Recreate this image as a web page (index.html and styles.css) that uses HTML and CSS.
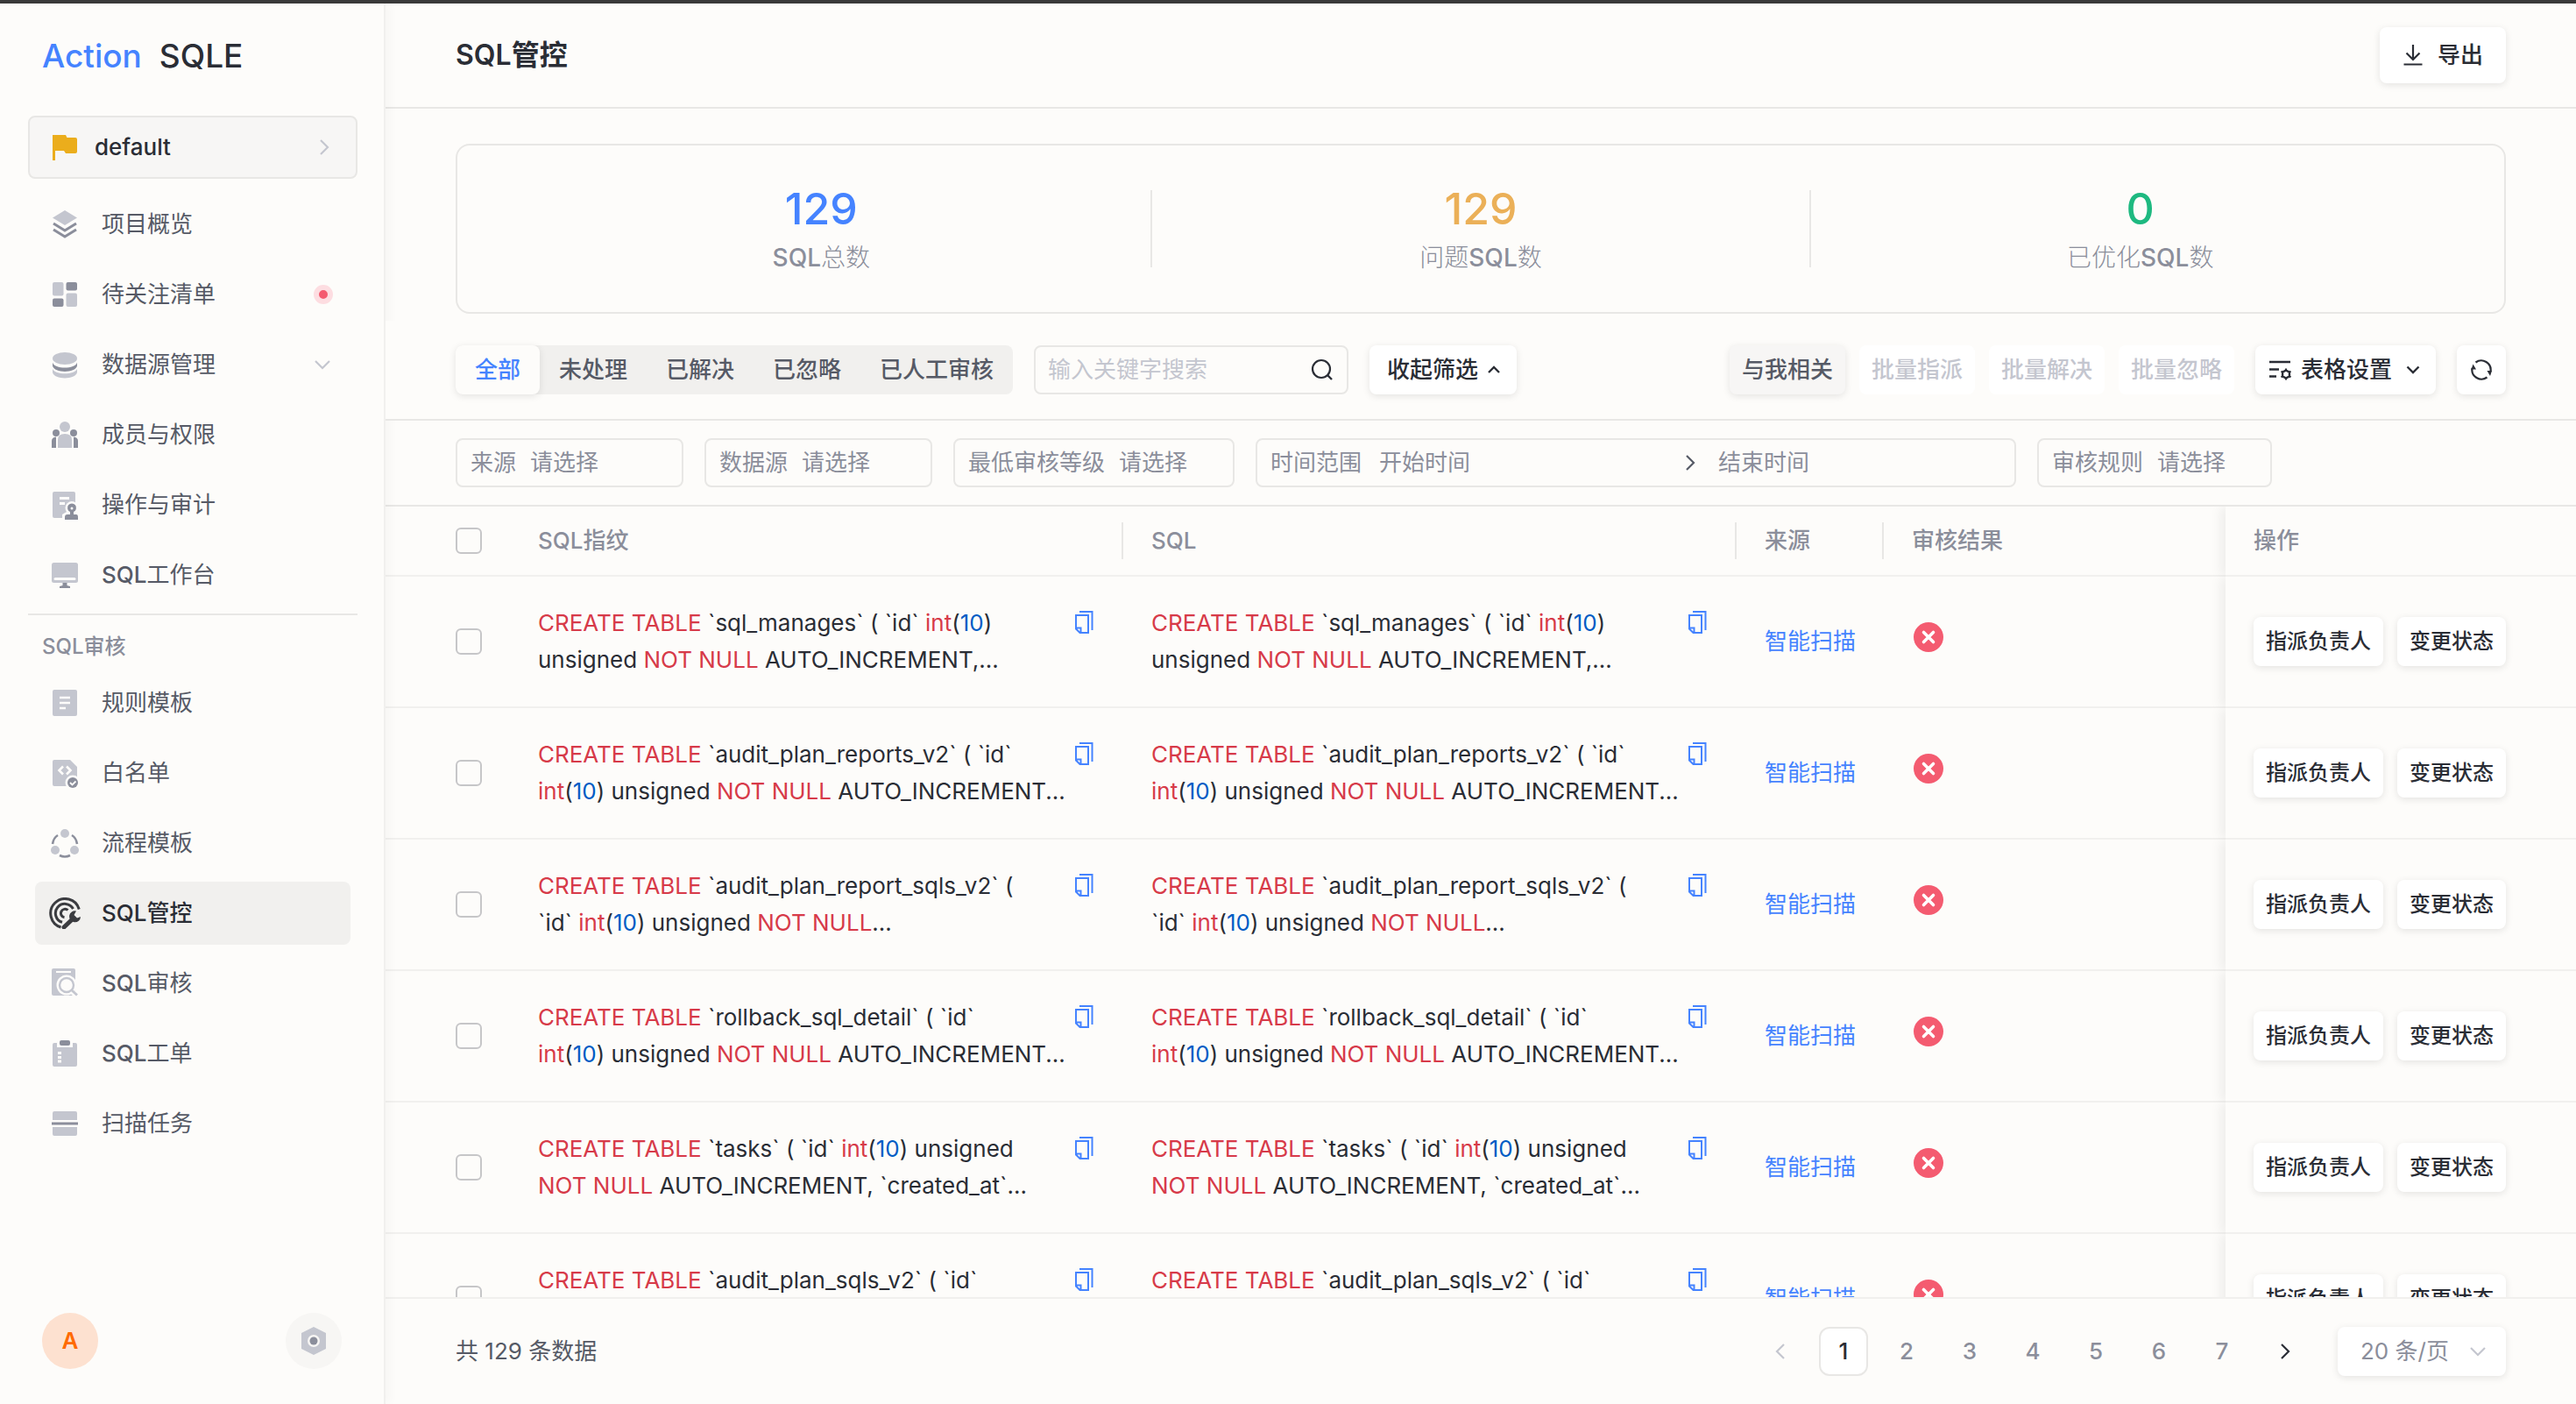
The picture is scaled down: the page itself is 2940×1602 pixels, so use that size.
FILE: index.html
```html
<!DOCTYPE html>
<html lang="zh-CN">
<head>
<meta charset="utf-8">
<title>SQL管控 - Action SQLE</title>
<link rel="stylesheet" href="styles.css">
</head>
<body>
<svg class="sprite" aria-hidden="true">
  <symbol id="i-copy" viewBox="0 0 28 28"><path d="M8 2h14.500v21M4 6h14v20h-9.500L4 21.500zM4 20.500h5.500V26" fill="none" stroke="currentColor" stroke-width="2"/></symbol>
  <symbol id="i-error" viewBox="0 0 34 34"><circle cx="17" cy="17" r="17" fill="#f45b70"/><path d="M11.500 11.500l11 11M22.500 11.500l-11 11" stroke="#fff" stroke-width="3.600" stroke-linecap="round"/></symbol>
  <symbol id="i-right" viewBox="0 0 24 24"><path d="M8 4l8 8-8 8" fill="none" stroke="currentColor" stroke-width="2.200"/></symbol>
  <symbol id="i-left" viewBox="0 0 24 24"><path d="M16 4l-8 8 8 8" fill="none" stroke="currentColor" stroke-width="2.200"/></symbol>
  <symbol id="i-down" viewBox="0 0 24 24"><path d="M4 8l8 8 8-8" fill="none" stroke="currentColor" stroke-width="2.200"/></symbol>
</svg>
<div class="app">
  <aside class="sidebar">
    <div class="logo"><span class="logo-brand">Action</span><span>SQLE</span></div>
    <button class="project" type="button">
      <svg class="icon36" viewBox="0 0 36 36"><path d="M4 4h15l1.500 3H30q2 0 2 2v14q0 2-2 2H19l-2-3H7v11H4z" fill="#ebad1c"/></svg>
      <span class="project-name">default</span>
      <svg class="icon24 faint"><use href="#i-right"/></svg>
    </button>
    <nav class="menu">
      <a class="item" href="#"><svg class="icon36" viewBox="0 0 36 36"><path d="M18 2l14 8.500L18 19 4 10.500z" fill="#c4c6cf"/><path d="M5 17l13 8 13-8M5 24l13 8 13-8" fill="none" stroke="#8b8e9b" stroke-width="3"/></svg><span>项目概览</span></a>
      <a class="item" href="#"><svg class="icon36" viewBox="0 0 36 36"><g fill="#c4c6cf"><rect x="4" y="4" width="12.500" height="15.500" rx="2"/><rect x="19.500" y="16.500" width="12.500" height="15.500" rx="2"/></g><g fill="#8b8e9b"><rect x="19.500" y="4" width="12.500" height="9.500" rx="2"/><rect x="4" y="22.500" width="12.500" height="9.500" rx="2"/></g></svg><span>待关注清单</span><i class="dot"></i></a>
      <a class="item" href="#"><svg class="icon36" viewBox="0 0 36 36"><ellipse cx="18" cy="11" rx="14" ry="7" fill="#c4c6cf"/><path d="M4 15.500c2 8 26 8 28 0v4c-2 8.500-26 8.500-28 0z" fill="#8b8e9b"/><path d="M4 23c3 7 25 7 28 0v4c-2 8.500-26 8.500-28 0z" fill="#c4c6cf"/></svg><span>数据源管理</span><svg class="icon24 faint"><use href="#i-down"/></svg></a>
      <a class="item" href="#"><svg class="icon36" viewBox="0 0 36 36"><g fill="#c4c6cf"><circle cx="18" cy="9" r="6"/><path d="M10 33v-9q0-7 8-7t8 7v9z"/></g><g fill="#8b8e9b"><circle cx="8" cy="16" r="4"/><circle cx="28" cy="16" r="4"/><path d="M3 33v-8q0-4 5-4.500V33zM33 33v-8q0-4-5-4.500V33z"/></g></svg><span>成员与权限</span></a>
      <a class="item" href="#"><svg class="icon36" viewBox="0 0 36 36"><rect x="4" y="3" width="26" height="30" rx="2" fill="#c4c6cf"/><path d="M12 10.500h11M12 16.500h6" stroke="#fdfcfa" stroke-width="3"/><path d="M15 36v-7l5-3a7.500 7.500 0 1 1 12 0l4 3v7z" fill="#fdfcfa"/><path d="M18 35v-3q0-3 3-3h3v-3a5 5 0 1 1 4 0v3h3q2 0 2 3v3z" fill="#8b8e9b"/><circle cx="26" cy="22" r="1.500" fill="#fdfcfa"/></svg><span>操作与审计</span></a>
      <a class="item" href="#"><svg class="icon36" viewBox="0 0 36 36"><rect x="3" y="4" width="30" height="23" rx="2.500" fill="#c4c6cf"/><path d="M7 22.500h22" stroke="#fdfcfa" stroke-width="3" stroke-linecap="round"/><path d="M15.500 27h5v3l3.500 1v2H12v-2l3.500-1z" fill="#8b8e9b"/></svg><span><b>SQL</b>工作台</span></a>
      <h2 class="group">SQL审核</h2>
      <a class="item" href="#"><svg class="icon36" viewBox="0 0 36 36"><rect x="4" y="3" width="28" height="30" rx="2" fill="#c4c6cf"/><path d="M12 12h12M12 18h12M12 24h7" stroke="#fdfcfa" stroke-width="2.600"/></svg><span>规则模板</span></a>
      <a class="item" href="#"><svg class="icon36" viewBox="0 0 36 36"><path d="M6 3h18l8 8v20q0 2-2 2H6q-2 0-2-2V5q0-2 2-2z" fill="#c4c6cf"/><path d="M16 10.500l-4.500 4.500 4.500 4.500M20 10.500l4.500 4.500-4.500 4.500" fill="none" stroke="#fdfcfa" stroke-width="2.600"/><circle cx="27" cy="29" r="8.500" fill="#fdfcfa"/><circle cx="27" cy="29" r="6" fill="#8b8e9b"/><path d="M24 29l2.500 2.500 4-4" fill="none" stroke="#fdfcfa" stroke-width="1.800"/></svg><span>白名单</span></a>
      <a class="item" href="#"><svg class="icon36" viewBox="0 0 36 36"><g fill="#c4c6cf"><circle cx="18" cy="7" r="5"/><circle cx="7" cy="26" r="5"/><circle cx="29" cy="26" r="5"/></g><path d="M4 19q1-7 6-10M32 19q-1-7-6-10M12 32q6 3 12 0" fill="none" stroke="#8b8e9b" stroke-width="2.600"/></svg><span>流程模板</span></a>
      <a class="item active" href="#"><svg class="icon36" viewBox="0 0 36 36"><path d="M34.300 13.500A16.600 16.600 0 1 0 13.500 34M27.500 13A10.700 10.700 0 1 0 15 28.300M21.500 14.500A4.800 4.800 0 1 0 17.500 22.800" fill="none" stroke="#3b3c40" stroke-width="3"/><path d="M17 34l10-9.500" stroke="#3b3c40" stroke-width="5" stroke-linecap="round"/><path d="M31 15.500a6.500 6.500 0 1 0 5 6.500l-4 1.500-3.500-3.500z" fill="#3b3c40"/></svg><span>SQL管控</span></a>
      <a class="item" href="#"><svg class="icon36" viewBox="0 0 36 36"><rect x="3" y="1" width="27" height="31" rx="2" fill="#c4c6cf"/><path d="M8 5h17" stroke="#fdfcfa" stroke-width="2"/><circle cx="20" cy="20" r="11.500" fill="#fdfcfa"/><path d="M26 27l7 7" stroke="#fdfcfa" stroke-width="6"/><circle cx="20" cy="20" r="8" fill="none" stroke="#c4c6cf" stroke-width="2.400"/><path d="M26 26l6 5.500" stroke="#c4c6cf" stroke-width="2.800"/></svg><span><b>SQL</b>审核</span></a>
      <a class="item" href="#"><svg class="icon36" viewBox="0 0 36 36"><path d="M6 6h3v5h18V6h3q2 0 2 2v23q0 2-2 2H6q-2 0-2-2V8q0-2 2-2z" fill="#c4c6cf"/><rect x="12" y="3" width="12" height="6" rx="2" fill="#8b8e9b"/><path d="M10 17.500h4M10 22.500h4M10 27h4" stroke="#fdfcfa" stroke-width="3"/></svg><span><b>SQL</b>工单</span></a>
      <a class="item" href="#"><svg class="icon36" viewBox="0 0 36 36"><path d="M4 14V6q0-2 2-2h24q2 0 2 2v8zM4 22h28v8q0 2-2 2H6q-2 0-2-2z" fill="#c4c6cf"/><path d="M3 18h30" stroke="#8b8e9b" stroke-width="3"/></svg><span>扫描任务</span></a>
    </nav>
    <div class="side-foot">
      <button class="round avatar" type="button">A</button>
      <button class="round settings" type="button" aria-label="设置"><svg class="icon36" viewBox="0 0 36 36"><path d="M18 2l14 7v18l-14 7-14-7V9z" fill="#c4c6cf"/><circle cx="18" cy="18" r="7" fill="#f7f6f4"/><circle cx="18" cy="18" r="4.500" fill="#8b8e9b"/></svg></button>
    </div>
  </aside>

  <main class="main">
    <header class="header">
      <h1>SQL管控</h1>
      <button class="btn export" type="button"><svg class="icon24" viewBox="0 0 24 24"><path d="M12 0v17M4.500 9.500L12 17l7.500-7.500M1.500 22.500h21" fill="none" stroke="currentColor" stroke-width="2.200"/></svg><span>导出</span></button>
    </header>

    <section class="stats">
      <div class="stat"><strong class="blue">129</strong><span><b>SQL</b>总数</span></div>
      <div class="stat"><strong class="orange">129</strong><span>问题<b>SQL</b>数</span></div>
      <div class="stat"><strong class="green">0</strong><span>已优化<b>SQL</b>数</span></div>
    </section>

    <section class="toolbar">
      <div class="segment">
        <button class="seg on" type="button">全部</button><button class="seg" type="button">未处理</button><button class="seg" type="button">已解决</button><button class="seg" type="button">已忽略</button><button class="seg" type="button">已人工审核</button>
      </div>
      <label class="search"><input type="text" placeholder="输入关键字搜索" aria-label="输入关键字搜索"><svg class="icon28" viewBox="0 0 28 28"><circle cx="13" cy="13" r="10" fill="none" stroke="currentColor" stroke-width="2.200"/><path d="M20 20l5 5" stroke="currentColor" stroke-width="2.400"/></svg></label>
      <button class="btn fold" type="button"><span>收起筛选</span><svg class="icon20" viewBox="0 0 20 20"><path d="M4 13l6-6 6 6" fill="none" stroke="currentColor" stroke-width="2.400"/></svg></button>
      <div class="actions">
        <div class="batch">
          <button class="btn mine" type="button">与我相关</button>
          <button class="btn" type="button" disabled>批量指派</button>
          <button class="btn" type="button" disabled>批量解决</button>
          <button class="btn" type="button" disabled>批量忽略</button>
        </div>
        <button class="btn table-set" type="button"><svg class="icon28" viewBox="0 0 28 28"><path d="M2 5h24M2 13.500h11M2 21.500h8" stroke="currentColor" stroke-width="2.400"/><path d="M21 14.500l3.900 2.200v4.600L21 23.500l-3.900-2.200v-4.600z" fill="none" stroke="currentColor" stroke-width="2.400"/><path d="M21 12.500v2M21 23.500v2M15.500 15.700l1.600 1M26.500 15.700l-1.600 1M15.500 22.300l1.600-1M26.500 22.300l-1.600-1" stroke="currentColor" stroke-width="2"/></svg><span>表格设置</span><svg class="icon20" viewBox="0 0 20 20"><path d="M3.500 6.500L10 13l6.500-6.500" fill="none" stroke="currentColor" stroke-width="2.400"/></svg></button>
        <button class="btn refresh" type="button" aria-label="刷新"><svg class="icon28" viewBox="0 0 28 28"><path d="M7.500 5.500A10.800 10.800 0 0 1 24.500 16M20.500 22.500A10.800 10.800 0 0 1 3.500 12" fill="none" stroke="currentColor" stroke-width="2.200"/><path d="M4.500 7.500L8 13.500H2.500zM20.500 15H26l-2 6z" fill="currentColor"/></svg></button>
      </div>
    </section>

    <section class="filters">
      <label class="field w-s"><span>来源</span><select><option>请选择</option></select></label>
      <label class="field w-s"><span>数据源</span><select><option>请选择</option></select></label>
      <label class="field w-m"><span>最低审核等级</span><select><option>请选择</option></select></label>
      <div class="field w-l"><label for="from">时间范围</label><input id="from" type="text" placeholder="开始时间"><svg class="icon24 dark"><use href="#i-right"/></svg><input type="text" placeholder="结束时间" aria-label="结束时间"></div>
      <label class="field w-r"><span>审核规则</span><select><option>请选择</option></select></label>
    </section>

    <div class="table-wrap">
      <table>
        <colgroup><col class="c-check"><col class="c-sql"><col class="c-sql"><col class="c-src"><col><col class="c-op"></colgroup>
        <thead>
          <tr><th class="check"><input type="checkbox" aria-label="全选"></th><th><div class="th sep">SQL指纹</div></th><th><div class="th sep">SQL</div></th><th><div class="th sep">来源</div></th><th><div class="th">审核结果</div></th><th class="op"><div class="th">操作</div></th></tr>
        </thead>
        <tbody>
          <tr>
            <td class="check"><input type="checkbox" aria-label="选择"></td>
            <td><div class="sql"><code><em>CREATE</em> <em>TABLE</em> `sql_manages` ( `id` <em>int</em>(<i>10</i>)<br>unsigned <em>NOT NULL</em> AUTO_INCREMENT,...</code><button class="copy" type="button" aria-label="复制"><svg class="icon28"><use href="#i-copy"/></svg></button></div></td>
            <td><div class="sql"><code><em>CREATE</em> <em>TABLE</em> `sql_manages` ( `id` <em>int</em>(<i>10</i>)<br>unsigned <em>NOT NULL</em> AUTO_INCREMENT,...</code><button class="copy" type="button" aria-label="复制"><svg class="icon28"><use href="#i-copy"/></svg></button></div></td>
            <td><a href="#">智能扫描</a></td><td><svg class="error"><use href="#i-error"/></svg></td>
            <td class="op"><div class="ops"><button class="btn small" type="button">指派负责人</button><button class="btn small" type="button">变更状态</button></div></td>
          </tr>
          <tr>
            <td class="check"><input type="checkbox" aria-label="选择"></td>
            <td><div class="sql"><code><em>CREATE</em> <em>TABLE</em> `audit_plan_reports_v2` ( `id`<br><em>int</em>(<i>10</i>) unsigned <em>NOT NULL</em> AUTO_INCREMENT...</code><button class="copy" type="button" aria-label="复制"><svg class="icon28"><use href="#i-copy"/></svg></button></div></td>
            <td><div class="sql"><code><em>CREATE</em> <em>TABLE</em> `audit_plan_reports_v2` ( `id`<br><em>int</em>(<i>10</i>) unsigned <em>NOT NULL</em> AUTO_INCREMENT...</code><button class="copy" type="button" aria-label="复制"><svg class="icon28"><use href="#i-copy"/></svg></button></div></td>
            <td><a href="#">智能扫描</a></td><td><svg class="error"><use href="#i-error"/></svg></td>
            <td class="op"><div class="ops"><button class="btn small" type="button">指派负责人</button><button class="btn small" type="button">变更状态</button></div></td>
          </tr>
          <tr>
            <td class="check"><input type="checkbox" aria-label="选择"></td>
            <td><div class="sql"><code><em>CREATE</em> <em>TABLE</em> `audit_plan_report_sqls_v2` (<br>`id` <em>int</em>(<i>10</i>) unsigned <em>NOT NULL</em>...</code><button class="copy" type="button" aria-label="复制"><svg class="icon28"><use href="#i-copy"/></svg></button></div></td>
            <td><div class="sql"><code><em>CREATE</em> <em>TABLE</em> `audit_plan_report_sqls_v2` (<br>`id` <em>int</em>(<i>10</i>) unsigned <em>NOT NULL</em>...</code><button class="copy" type="button" aria-label="复制"><svg class="icon28"><use href="#i-copy"/></svg></button></div></td>
            <td><a href="#">智能扫描</a></td><td><svg class="error"><use href="#i-error"/></svg></td>
            <td class="op"><div class="ops"><button class="btn small" type="button">指派负责人</button><button class="btn small" type="button">变更状态</button></div></td>
          </tr>
          <tr>
            <td class="check"><input type="checkbox" aria-label="选择"></td>
            <td><div class="sql"><code><em>CREATE</em> <em>TABLE</em> `rollback_sql_detail` ( `id`<br><em>int</em>(<i>10</i>) unsigned <em>NOT NULL</em> AUTO_INCREMENT...</code><button class="copy" type="button" aria-label="复制"><svg class="icon28"><use href="#i-copy"/></svg></button></div></td>
            <td><div class="sql"><code><em>CREATE</em> <em>TABLE</em> `rollback_sql_detail` ( `id`<br><em>int</em>(<i>10</i>) unsigned <em>NOT NULL</em> AUTO_INCREMENT...</code><button class="copy" type="button" aria-label="复制"><svg class="icon28"><use href="#i-copy"/></svg></button></div></td>
            <td><a href="#">智能扫描</a></td><td><svg class="error"><use href="#i-error"/></svg></td>
            <td class="op"><div class="ops"><button class="btn small" type="button">指派负责人</button><button class="btn small" type="button">变更状态</button></div></td>
          </tr>
          <tr>
            <td class="check"><input type="checkbox" aria-label="选择"></td>
            <td><div class="sql"><code><em>CREATE</em> <em>TABLE</em> `tasks` ( `id` <em>int</em>(<i>10</i>) unsigned<br><em>NOT NULL</em> AUTO_INCREMENT, `created_at`...</code><button class="copy" type="button" aria-label="复制"><svg class="icon28"><use href="#i-copy"/></svg></button></div></td>
            <td><div class="sql"><code><em>CREATE</em> <em>TABLE</em> `tasks` ( `id` <em>int</em>(<i>10</i>) unsigned<br><em>NOT NULL</em> AUTO_INCREMENT, `created_at`...</code><button class="copy" type="button" aria-label="复制"><svg class="icon28"><use href="#i-copy"/></svg></button></div></td>
            <td><a href="#">智能扫描</a></td><td><svg class="error"><use href="#i-error"/></svg></td>
            <td class="op"><div class="ops"><button class="btn small" type="button">指派负责人</button><button class="btn small" type="button">变更状态</button></div></td>
          </tr>
          <tr>
            <td class="check"><input type="checkbox" aria-label="选择"></td>
            <td><div class="sql"><code><em>CREATE</em> <em>TABLE</em> `audit_plan_sqls_v2` ( `id`<br><em>int</em>(<i>10</i>) unsigned <em>NOT NULL</em> AUTO_INCREMENT...</code><button class="copy" type="button" aria-label="复制"><svg class="icon28"><use href="#i-copy"/></svg></button></div></td>
            <td><div class="sql"><code><em>CREATE</em> <em>TABLE</em> `audit_plan_sqls_v2` ( `id`<br><em>int</em>(<i>10</i>) unsigned <em>NOT NULL</em> AUTO_INCREMENT...</code><button class="copy" type="button" aria-label="复制"><svg class="icon28"><use href="#i-copy"/></svg></button></div></td>
            <td><a href="#">智能扫描</a></td><td><svg class="error"><use href="#i-error"/></svg></td>
            <td class="op"><div class="ops"><button class="btn small" type="button">指派负责人</button><button class="btn small" type="button">变更状态</button></div></td>
          </tr>
        </tbody>
      </table>
    </div>

    <footer class="footer">
      <span class="total">共 129 条数据</span>
      <nav class="pages">
        <button class="page faint" type="button" aria-label="上一页" disabled><svg class="icon24"><use href="#i-left"/></svg></button>
        <button class="page current" type="button">1</button><button class="page" type="button">2</button><button class="page" type="button">3</button><button class="page" type="button">4</button><button class="page" type="button">5</button><button class="page" type="button">6</button><button class="page" type="button">7</button>
        <button class="page next" type="button" aria-label="下一页"><svg class="icon24"><use href="#i-right"/></svg></button>
      </nav>
      <label class="size"><select aria-label="每页条数"><option>20 条/页</option></select><svg class="icon24 faint"><use href="#i-down"/></svg></label>
    </footer>
  </main>
</div>
</body>
</html>
```
FILE: styles.css
```css
* { box-sizing: border-box; }
body {
  margin: 0;
  background: #fdfcfa;
  color: #2a2d35;
  font: 500 26px/40px Inter, "Noto Sans CJK SC", sans-serif;
}
button, input, select { font: inherit; color: inherit; margin: 0; padding: 0; border: 0; background: none; }
select, input { appearance: none; outline: 0; }
a { text-decoration: none; color: #4583ff; }
b { font-weight: 500; }
svg { display: block; flex: none; }
.sprite { position: absolute; width: 0; height: 0; }
.icon20 { width: 20px; height: 20px; }
.icon24 { width: 24px; height: 24px; }
.icon28 { width: 28px; height: 28px; }
.icon36 { width: 36px; height: 36px; }
.faint { color: #c4c6cf; }
.dark { color: #565a66; }

.app {
  display: flex;
  height: 100vh;
  border-top: 4px solid #3a3a3a;
}

/* Sidebar */
.sidebar {
  display: flex;
  flex-direction: column;
  width: 440px;
  flex: none;
  border-right: 2px solid #f1f0ee;
  box-shadow: 4px 0 12px rgba(0, 0, 0, .03);
  position: relative;
  z-index: 1;
}
.logo { display: flex; gap: 20px; padding: 36px 48px 44px; font-size: 37px; line-height: 48px; }
.logo-brand { color: #4583ff; }
.project {
  display: flex;
  align-items: center;
  height: 72px;
  margin: 0 30px 16px 32px;
  padding: 0 24px 0 22px;
  border: 2px solid #e8e7e5;
  border-radius: 8px;
  background: #f7f6f5;
}
.project-name { flex: 1; text-align: left; padding-left: 16px; }
.menu { display: flex; flex-direction: column; gap: 8px; flex: 1; }
.item {
  display: flex;
  align-items: center;
  height: 72px;
  margin: 0 38px 0 40px;
  padding: 0 20px 0 16px;
  border-radius: 8px;
  color: #565a66;
  font-weight: 400;
}
.item > span { flex: 1; padding-left: 24px; }
.item.active { background: #f1f0ee; color: #2a2d35; font-weight: 500; }
.dot { width: 22px; height: 22px; border: 6px solid #fddde1; border-radius: 50%; background: #f45b70; }
.group {
  height: 66px;
  margin: 0 30px -8px 32px;
  padding: 16px;
  border-top: 2px solid #e8e7e5;
  color: #8b8e9b;
  font-size: 24px;
  font-weight: 500;
}
.side-foot { display: flex; justify-content: space-between; padding: 0 48px 40px; }
.round { display: flex; align-items: center; justify-content: center; width: 64px; height: 64px; border-radius: 50%; }
.avatar { background: #fde1d0; color: #ff6a00; font-weight: 600; }
.settings { background: #f7f6f4; }

/* Page header */
.main { display: flex; flex-direction: column; flex: 1; min-width: 0; }
.header {
  display: flex;
  align-items: center;
  justify-content: space-between;
  height: 120px;
  flex: none;
  padding: 0 80px;
  border-bottom: 2px solid #e8e7e5;
}
h1 { margin: 0; font-size: 32px; font-weight: 600; }
.btn {
  display: flex;
  align-items: center;
  justify-content: center;
  height: 56px;
  padding: 0 14px;
  border-radius: 8px;
  background: #fff;
  box-shadow: 0 2px 8px rgba(0, 0, 0, .1);
  font-weight: 500;
  white-space: nowrap;
}
.btn:disabled { color: #c4c6cf; box-shadow: none; }
.export { height: 64px; padding: 0 26px; gap: 16px; }

.stats {
  display: flex;
  height: 194px;
  flex: none;
  margin: 40px 80px 8px;
  padding: 0 40px;
  align-items: center;
  border: 2px solid #e8e7e5;
  border-radius: 16px;
}
.stat {
  display: flex;
  flex-direction: column;
  align-items: center;
  justify-content: center;
  gap: 16px;
  flex: 1;
  height: 88px;
  padding-top: 10px;
}
.stat + .stat { border-left: 2px solid #e8e7e5; }
.stat strong { font-size: 50px; line-height: 40px; font-weight: 500; }
.stat span { font-size: 28px; line-height: 40px; font-weight: 300; color: #8b8e9b; }
.stat .blue { color: #4583ff; }
.stat .orange { color: #ebb058; }
.stat .green { color: #1eb980; }

/* Toolbar */
.toolbar {
  display: flex;
  align-items: center;
  gap: 24px;
  height: 114px;
  flex: none;
  padding: 0 80px;
  border-bottom: 2px solid #e8e7e5;
  background: #fdfcfa;
  position: relative;
  z-index: 2;
}
.segment { display: flex; border-radius: 8px; background: #f1f0ee; }
.seg { height: 56px; padding: 0 22px; border-radius: 8px; color: #565a66; font-weight: 500; }
.seg.on { background: #fdfcfa; color: #4583ff; box-shadow: 0 2px 8px rgba(0, 0, 0, .1); }
.search {
  display: flex;
  align-items: center;
  width: 359px;
  height: 56px;
  padding: 0 14px;
  border: 2px solid #e8e7e5;
  border-radius: 8px;
}
.search input { flex: 1; min-width: 0; font-weight: 400; }
::placeholder { color: #8b8e9b; opacity: 1; }
.search ::placeholder { color: #c4c6cf; }
.fold { padding: 0 16px 0 20px; gap: 8px; }
.actions { display: flex; gap: 24px; margin-left: auto; }
.batch { display: flex; gap: 16px; }
.mine { background: #f7f6f5; color: #565a66; }
.table-set { padding: 0 16px 0 14px; }
.table-set span { padding: 0 14px 0 10px; }

.filters { display: flex; gap: 24px; flex: none; padding: 20px 80px; border-bottom: 2px solid #e8e7e5; }
.field {
  display: flex;
  align-items: center;
  gap: 16px;
  height: 56px;
  padding: 0 15px;
  border: 2px solid #e8e7e5;
  border-radius: 8px;
  color: #8b8e9b;
  font-weight: 400;
  white-space: nowrap;
}
.field select, .field input { flex: 1; min-width: 0; }
.w-s { width: 260px; }
.w-m { width: 321px; }
.w-l { width: 868px; gap: 20px; }
.w-r { width: 268px; }

/* Table */
.table-wrap { flex: 1; min-height: 0; overflow: hidden; }
table { width: 100%; table-layout: fixed; border-collapse: separate; border-spacing: 0; }
.c-check { width: 142px; }
.c-sql { width: 700px; }
.c-src { width: 168px; }
.c-op { width: 400px; }
th, td { padding: 0 0 0 32px; border-bottom: 2px solid #f1f0ee; text-align: left; font-weight: 400; }
th { height: 80px; color: #8b8e9b; font-weight: 500; }
td { height: 150px; }
.th { height: 42px; line-height: 42px; }
.sep { border-right: 2px solid #e8e7e5; }
.check { padding-left: 80px; }
.check input {
  display: block;
  width: 30px;
  height: 30px;
  border: 2px solid #c6c6c8;
  border-radius: 6px;
}
.op { background: #fdfcfa; box-shadow: -6px 0 12px rgba(0, 0, 0, .06); clip-path: inset(0 0 0 -20px); }
.sql { display: flex; justify-content: space-between; padding-right: 30px; white-space: nowrap; }
code { font-family: inherit; font-size: 26px; line-height: 42px; }
code em { font-style: normal; color: #d73a49; }
code i { font-style: normal; color: #005cc5; }
.copy { height: 28px; margin-top: 6px; color: #4583ff; }
.error { width: 34px; height: 34px; margin: 0 0 10px 2px; }
.ops { display: flex; gap: 16px; }
.small { font-size: 24px; }

/* Footer */
.footer {
  display: flex;
  align-items: center;
  height: 122px;
  flex: none;
  padding: 0 80px;
  border-top: 2px solid #f1f0ee;
}
.total { flex: 1; color: #565a66; font-weight: 400; }
.pages { display: flex; gap: 16px; color: #8b8e9b; }
.page { display: flex; align-items: center; justify-content: center; width: 56px; height: 56px; border-radius: 12px; }
.current { border: 2px solid #e8e7e5; background: #fff; color: #2a2d35; }
.next { color: #2a2d35; }
.page.faint { color: #c4c6cf; }
.size {
  display: flex;
  align-items: center;
  width: 192px;
  height: 56px;
  margin-left: 32px;
  padding: 0 20px 0 26px;
  border-radius: 8px;
  background: #fff;
  box-shadow: 0 2px 8px rgba(0, 0, 0, .1);
  color: #8b8e9b;
  font-weight: 400;
}
.size select { flex: 1; min-width: 0; }
```
